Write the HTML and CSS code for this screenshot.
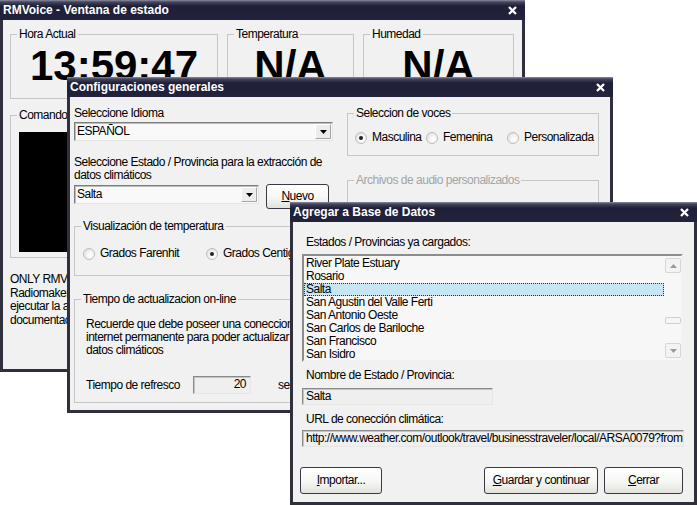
FILE: index.html
```html
<!DOCTYPE html>
<html lang="es">
<head>
<meta charset="utf-8">
<title>RMVoice</title>
<link rel="stylesheet" href="styles.css">
</head>
<body>
<div class="desktop">

  <section class="win win-status">
    <header class="titlebar">
      <span class="title">RMVoice - Ventana de estado</span>
      <svg class="xbtn" viewBox="0 0 9 9"><path d="M1 1L8 8M8 1L1 8"/></svg>
    </header>
    <div class="body status-body">
      <div class="readouts">
        <fieldset class="grp"><legend>Hora Actual</legend><div class="big">13:59:47</div></fieldset>
        <fieldset class="grp"><legend>Temperatura</legend><div class="big">N/A</div></fieldset>
        <fieldset class="grp"><legend>Humedad</legend><div class="big">N/A</div></fieldset>
      </div>
      <fieldset class="grp g-cmd"><legend>Comandos</legend><div class="cmd-inner"><div class="screen"></div></div></fieldset>
      <p class="note">ONLY RMVoice<br>Radiomaker<br>ejecutar la app<br>documentación</p>
    </div>
  </section>

  <section class="win win-config">
    <header class="titlebar">
      <span class="title">Configuraciones generales</span>
      <svg class="xbtn" viewBox="0 0 9 9"><path d="M1 1L8 8M8 1L1 8"/></svg>
    </header>
    <div class="body config-body">
      <div class="col">
        <div class="lbl">Seleccione Idioma</div>
        <div class="combo c-idioma"><span class="combo-val">ESPAÑOL</span><span class="drop"><svg viewBox="0 0 7 4"><path d="M0 0h7L3.5 4z"/></svg></span></div>
        <div class="lbl lbl-gap">Seleccione Estado / Provincia para la extracción de<br>datos climáticos</div>
        <div class="combo-row">
          <div class="combo c-estado"><span class="combo-val">Salta</span><span class="drop"><svg viewBox="0 0 7 4"><path d="M0 0h7L3.5 4z"/></svg></span></div>
          <div class="btn b-nuevo"><span><u>N</u>uevo</span></div>
        </div>
        <fieldset class="grp g-visual"><legend>Visualización de temperatura</legend>
          <div class="radios r-temp">
            <span class="opt"><span class="radio"></span>Grados Farenhit</span>
            <span class="opt"><span class="radio on"></span>Grados Centigrados</span>
          </div>
        </fieldset>
        <fieldset class="grp g-tiempo"><legend>Tiempo de actualizacion on-line</legend>
          <div class="tiempo-inner">
            <p class="info">Recuerde que debe poseer una coneccion a<br>internet permanente para poder actualizar los<br>datos climáticos</p>
            <div class="refresh-row">
              <span class="refresh-lbl">Tiempo de refresco</span>
              <span class="field f-num">20</span>
              <span class="unit">segundos</span>
            </div>
          </div>
        </fieldset>
      </div>
      <div class="col">
        <fieldset class="grp g-voces"><legend>Seleccion de voces</legend>
          <div class="radios r-voz">
            <span class="opt"><span class="radio on"></span>Masculina</span>
            <span class="opt"><span class="radio"></span>Femenina</span>
            <span class="opt"><span class="radio"></span>Personalizada</span>
          </div>
        </fieldset>
        <fieldset class="grp g-audio"><legend>Archivos de audio personalizados</legend></fieldset>
      </div>
    </div>
  </section>

  <section class="win win-db">
    <header class="titlebar">
      <span class="title">Agregar a Base de Datos</span>
      <svg class="xbtn" viewBox="0 0 9 9"><path d="M1 1L8 8M8 1L1 8"/></svg>
    </header>
    <div class="body db-body">
      <div class="lbl ind">Estados / Provincias ya cargados:</div>
      <div class="list">
        <ul class="items">
          <li>River Plate Estuary</li>
          <li>Rosario</li>
          <li class="sel">Salta</li>
          <li>San Agustin del Valle Ferti</li>
          <li>San Antonio Oeste</li>
          <li>San Carlos de Bariloche</li>
          <li>San Francisco</li>
          <li>San Isidro</li>
        </ul>
        <div class="scroll">
          <span class="sb-btn"><svg viewBox="0 0 7 4"><path d="M0 4h7L3.5 0z"/></svg></span>
          <span class="sb-track"><span class="thumb"></span></span>
          <span class="sb-btn"><svg viewBox="0 0 7 4"><path d="M0 0h7L3.5 4z"/></svg></span>
        </div>
      </div>
      <div class="lbl ind gap-a">Nombre de Estado / Provincia:</div>
      <div class="field f-name">Salta</div>
      <div class="lbl ind gap-b">URL de conección climática:</div>
      <div class="field f-url">http://www.weather.com/outlook/travel/businesstraveler/local/ARSA0079?from=search</div>
      <div class="btn-row">
        <div class="btn b-imp"><span><u>I</u>mportar...</span></div>
        <div class="btn b-save"><span><u>G</u>uardar y continuar</span></div>
        <div class="btn b-close"><span><u>C</u>errar</span></div>
      </div>
    </div>
  </section>

</div>
</body>
</html>
```

FILE: styles.css
```css
* { box-sizing: border-box; }
html, body { margin: 0; padding: 0; }
body {
  width: 697px; height: 505px; overflow: hidden; background: #fff;
  font-family: "Liberation Sans", Arial, sans-serif; font-size: 12px; line-height: 13px; color: #000;
  letter-spacing: -0.5px;
}
p { margin: 0; }
.desktop { position: relative; width: 697px; height: 505px; }

/* windows */
.win { position: absolute; display: flex; flex-direction: column; }
.win-status { left: 0; top: 0; width: 525px; height: 372px; }
.win-config { left: 67px; top: 77px; width: 546px; height: 336px; }
.win-db { left: 290px; top: 202px; width: 407px; height: 303px; }

.titlebar {
  flex: none; height: 20px; display: flex; align-items: center; justify-content: space-between;
  padding: 0 8px 0 3px; color: #fff; font-weight: bold; font-size: 12px; letter-spacing: 0;
  background: linear-gradient(to bottom, #8c8ca2 0, #45455e 2px, #1f1f38 6px, #22223c 100%);
}
.title { white-space: nowrap; }
.xbtn { width: 9px; height: 9px; flex: none; }
.xbtn path { stroke: #fff; stroke-width: 2.3; fill: none; }

.body {
  flex: 1; min-height: 0; overflow: hidden; background: #f1f1f1;
  border: 3px solid #2f2f3e; border-top: 0;
}

/* group boxes */
.grp { margin: 0; padding: 0; min-width: 0; border: 1px solid #c6c6c6; }
.grp legend { padding: 0 2px; margin-left: 6px; line-height: 13px; }

/* status window */
.status-body { padding: 8px 9px 0 7px; }
.readouts { display: grid; grid-template-columns: 208px 127px 151px; gap: 9px; }
.readouts .grp { height: 71px; }
.big { padding-top: 4px; text-align: center; font-weight: bold; font-size: 42px; line-height: 42px; letter-spacing: 0; }
.g-cmd { width: 208px; height: 149px; margin-top: 10px; }
.cmd-inner { padding: 10px 8px 0 8px; }
.screen { height: 120px; background: #000; }
.note { margin-top: 15px; line-height: 13.5px; white-space: nowrap; }

/* config window */
.config-body { padding: 10px 11px 0 4px; display: grid; grid-template-columns: 259px 252px; gap: 14px; align-items: start; }
.col { display: flex; flex-direction: column; }
.lbl { line-height: 13px; white-space: nowrap; }
.lbl-gap { margin-top: 15px; }

.combo {
  display: flex; height: 19px; padding: 1px; background: #f9f9f9;
  border: 1px solid; border-color: #7d7d7d #e4e4e4 #e4e4e4 #7d7d7d; box-shadow: inset 1px 1px #bdbdbd;
}
.c-idioma { margin-top: 2px; }
.combo-val { flex: 1; padding-left: 1px; line-height: 15px; white-space: nowrap; overflow: hidden; }
.drop {
  flex: none; width: 16px; display: flex; align-items: center; justify-content: center;
  background: #ededed; border: 1px solid; border-color: #fff #a6a6a6 #a6a6a6 #fff;
}
.drop svg { width: 7px; height: 4px; fill: #000; }

.combo-row { display: flex; align-items: flex-start; margin-top: 2px; }
.c-estado { width: 185px; margin-top: 1px; }
.b-nuevo { width: 63px; height: 25px; margin-left: 7px; }

.btn {
  display: flex; align-items: center; justify-content: center; white-space: nowrap;
  border: 1px solid #3a3a44; border-radius: 3px;
  background: linear-gradient(to bottom, #ffffff 0, #f6f6f4 55%, #e2e2dc 100%);
}
.btn u { text-decoration: underline; }

.g-visual { height: 56px; margin-top: 11px; }
.radios { display: grid; align-items: center; }
.r-temp { padding: 14px 0 0 8px; grid-template-columns: 123px auto; }
.opt { display: flex; align-items: center; gap: 5px; white-space: nowrap; line-height: 13px; }
.radio {
  flex: none; width: 12px; height: 12px; border-radius: 50%;
  border: 1px solid #bdbdbd; display: flex; align-items: center; justify-content: center;
  background: radial-gradient(circle at 65% 65%, #ffffff 0, #f2f2f2 45%, #d6d6d6 100%);
}
.radio.on::after { content: ""; width: 4px; height: 4px; border-radius: 50%; background: #222; }

.g-tiempo { height: 110px; margin-top: 17px; }
.tiempo-inner { padding: 12px 0 0 11px; }
.info { line-height: 13px; white-space: nowrap; }
.refresh-row { display: flex; align-items: center; margin-top: 19px; white-space: nowrap; }
.refresh-lbl { width: 107px; }
.field {
  height: 18px; line-height: 15px; padding: 0 3px; background: #efefef; white-space: nowrap; overflow: hidden;
  border: 1px solid; border-color: #8a8a8a #e6e6e6 #e6e6e6 #8a8a8a; box-shadow: inset 1px 1px #c4c4c4;
}
.f-num { width: 58px; text-align: right; padding-right: 4px; }
.unit { margin-left: 27px; }

.g-voces { height: 49px; }
.r-voz { padding: 11px 0 0 7px; grid-template-columns: 71px 81px auto; }
.g-audio { height: 120px; margin-top: 18px; }
.g-audio legend { color: #a4a4a4; }

/* database window */
.db-body { padding: 14px 11px 0 9px; display: flex; flex-direction: column; }
.ind { padding-left: 4px; }
.list {
  display: flex; height: 108px; margin-top: 5px; background: #f7f7f7;
  border: 2px solid; border-color: #8d8d8d #f2f2f2 #f2f2f2 #8d8d8d;
}
.items { flex: 1; list-style: none; margin: 0; padding: 1px 1px 0 0; overflow: hidden; }
.items li { height: 13px; line-height: 13px; padding-left: 2px; white-space: nowrap; }
.items li.sel { background: #c6e5f5; outline: 1px dotted #3a2a3a; outline-offset: -1px; }
.scroll { flex: none; width: 16px; display: flex; flex-direction: column; padding: 2px 0; }
.sb-btn {
  flex: none; height: 15px; display: flex; align-items: center; justify-content: center;
  background: #f3f3f3; border: 1px solid #d6d6d6; border-radius: 2px;
}
.sb-btn svg { width: 7px; height: 4px; fill: #9a9a9a; }
.sb-track { flex: 1; display: flex; flex-direction: column; }
.thumb { height: 7px; margin-top: 44px; background: #f6f6f6; border: 1px solid #cfcfcf; border-radius: 2px; }

.gap-a { margin-top: 7px; }
.f-name { width: 191px; height: 17px; margin-top: 6px; }
.gap-b { margin-top: 8px; }
.f-url { width: 382px; height: 17px; margin-top: 4px; }

.btn-row { display: flex; margin-top: 20px; margin-left: -2px; }
.btn-row .btn { height: 27px; }
.b-imp { width: 82px; }
.b-save { width: 114px; margin-left: auto; }
.b-close { width: 79px; margin-left: 6px; }
```
